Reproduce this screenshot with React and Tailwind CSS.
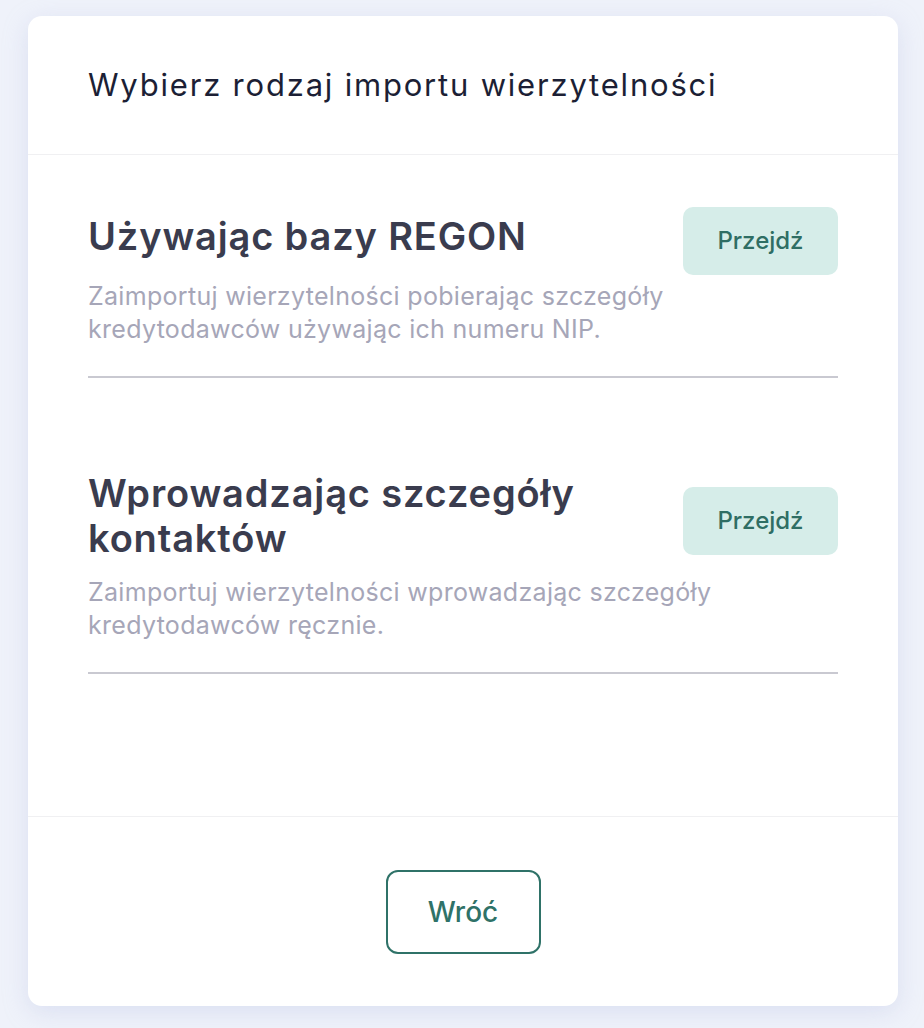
const options = [
  {
    title: 'Używając bazy REGON',
    text: 'Zaimportuj wierzytelności pobierając szczegóły kredytodawców używając ich numeru NIP.',
  },
  {
    title: 'Wprowadzając szczegóły kontaktów',
    text: 'Zaimportuj wierzytelności wprowadzając szczegóły kredytodawców ręcznie.',
  },
]

export default function App() {
  return (
    <div
      className="min-h-screen bg-[#eff2fa] pt-4 pl-7 pr-[26px] pb-5"
      style={{ fontFamily: 'Inter, "Noto Sans", sans-serif' }}
    >
      <div className="bg-white rounded-[14px] shadow-[0_6px_24px_rgba(180,190,225,0.35)] flex flex-col">
        {/* Header */}
        <div className="px-[60px] h-[139px] flex items-center border-b border-[#f0f0f2]">
          <h2 className="text-[31px] leading-9 text-[#1c1f35] tracking-[1.8px]">
            Wybierz rodzaj importu wierzytelności
          </h2>
        </div>

        {/* Options */}
        <div className="px-[60px] pt-[52px] h-[662px] flex flex-col gap-[93px] border-b border-[#f0f0f2]">
          {options.map((o) => (
            <div key={o.title}>
              <div className="flex items-center justify-between gap-6">
                <h3 className="text-[38px] leading-[45px] font-semibold text-[#3a3c4e] tracking-[0.85px] max-w-[540px]">
                  {o.title}
                </h3>
                <button className="-mb-[10px] w-[155px] h-[68px] shrink-0 rounded-[10px] bg-[#d6ede9] text-[#2f6e64] text-[24px] font-medium">
                  Przejdź
                </button>
              </div>
              <p className="mt-[15px] text-[25px] leading-[33px] text-[#a6a6b8] tracking-[0.3px] max-w-[680px]">
                {o.text}
              </p>
              <div className="mt-[30px] h-[2px] bg-[#c9c9d1]" />
            </div>
          ))}
        </div>

        {/* Footer */}
        <div className="pt-[53px] pb-[52px] flex justify-center">
          <button className="w-[155px] h-[84px] rounded-[12px] border-2 border-[#2f7268] text-[#2f7268] text-[28px] font-medium">
            Wróć
          </button>
        </div>
      </div>
    </div>
  )
}
